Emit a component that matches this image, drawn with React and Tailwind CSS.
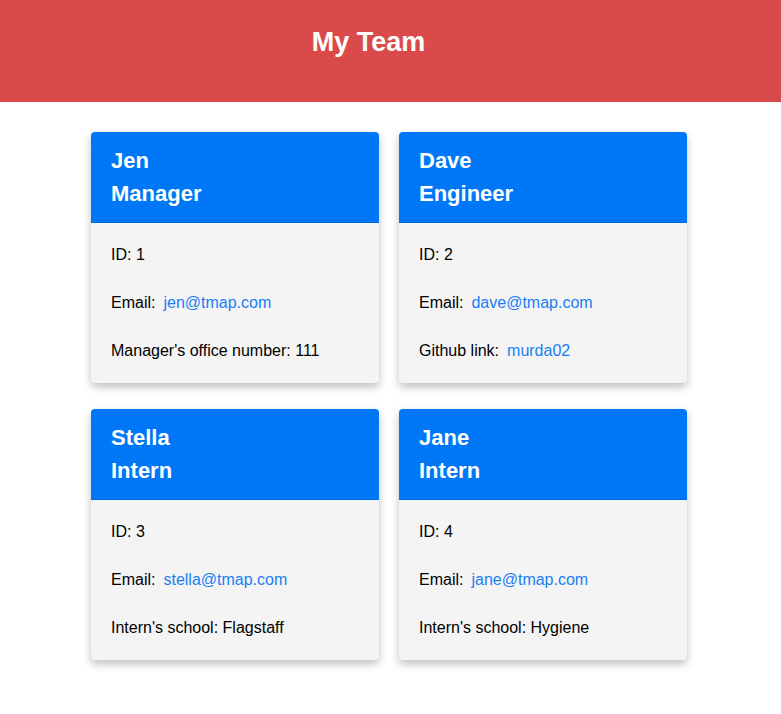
const team = [
  { name: 'Jen', role: 'Manager', id: 1, email: 'jen@tmap.com', extra: { label: "Manager's office number: 111" } },
  { name: 'Dave', role: 'Engineer', id: 2, email: 'dave@tmap.com', extra: { label: 'Github link:', link: 'murda02' } },
  { name: 'Stella', role: 'Intern', id: 3, email: 'stella@tmap.com', extra: { label: "Intern's school: Flagstaff" } },
  { name: 'Jane', role: 'Intern', id: 4, email: 'jane@tmap.com', extra: { label: "Intern's school: Hygiene" } },
]

function Card({ name, role, id, email, extra }) {
  return (
    <div className="w-[288px] overflow-hidden rounded-[4px] bg-[#f4f4f4] shadow-[0_4px_8px_rgba(0,0,0,0.25)]">
      <div className="border-b border-[#0069d9] bg-[#0077f6] px-5 py-3 text-[22px] font-bold leading-[33px] text-white">
        <div>{name}</div>
        <div>{role}</div>
      </div>
      <ul className="px-5 py-2 text-base leading-6 text-black">
        <li className="py-3">ID: {id}</li>
        <li className="py-3">
          Email:<a className="ml-[8px] text-[#1a7ef5]">{email}</a>
        </li>
        <li className="py-3">
          {extra.label}
          {extra.link && <a className="ml-[8px] text-[#1a7ef5]">{extra.link}</a>}
        </li>
      </ul>
    </div>
  )
}

export default function App() {
  return (
    <div className="min-h-[714px] bg-white font-['Liberation_Sans',Arial,sans-serif]">
      <header className="flex h-[102px] bg-[#db4a4a]">
        <h1 className="w-[737px] pt-6 text-center text-[27px] font-bold leading-[36px] text-white">
          My Team
        </h1>
      </header>
      <main className="ml-[91px] grid w-[596px] grid-cols-2 gap-x-5 gap-y-[26px] pt-[30px]">
        {team.map((m) => (
          <Card key={m.id} {...m} />
        ))}
      </main>
    </div>
  )
}
